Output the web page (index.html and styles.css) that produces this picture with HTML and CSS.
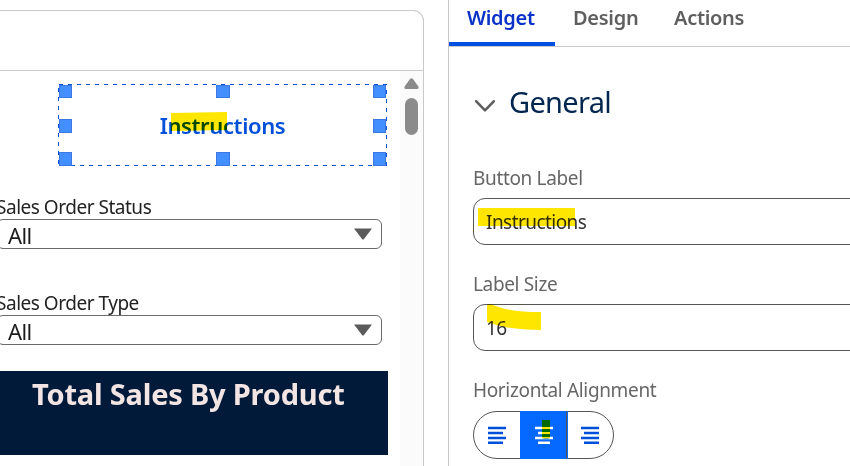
FILE: index.html
```html
<!DOCTYPE html>
<html lang="en">
<head>
<meta charset="utf-8">
<title>Dashboard editor</title>
<link rel="stylesheet" href="styles.css">
</head>
<body>
<div class="app">
  <main class="canvas">
    <div class="canvas-header"></div>
    <div class="canvas-body">
      <div class="content">
        <div class="selection">
          <svg class="outline" width="329" height="82" viewBox="0 0 329 82" fill="none" stroke="#0250d9" stroke-width="1" stroke-dasharray="4 5">
            <path d="M1 .5H329"/><path d="M4 81.5H329"/><path d="M.5 4V82"/><path d="M328.5 6V82"/>
          </svg>
          <div class="handles"><i></i><i></i><i></i><i class="mid"></i><b></b><i class="mid"></i><i></i><i></i><i></i></div>
          <span class="button-text">Instructions</span>
          <svg class="marker" width="57" height="20" viewBox="0 0 57 20"><path d="M0 1L56 0V18L0 19Z" fill="#ffe600"/></svg>
        </div>
        <div class="filter">
          <label class="filter-label">Sales Order Status</label>
          <div class="select"><span>All</span><svg width="18" height="12" viewBox="0 0 18 12"><path d="M0 .5H18L10 11Q9 12 8 11Z" fill="#5b5b5b"/></svg></div>
        </div>
        <div class="filter">
          <label class="filter-label">Sales Order Type</label>
          <div class="select"><span>All</span><svg width="18" height="12" viewBox="0 0 18 12"><path d="M0 .5H18L10 11Q9 12 8 11Z" fill="#5b5b5b"/></svg></div>
        </div>
        <div class="banner"><span>Total Sales By Product</span></div>
      </div>
      <div class="scrollbar">
        <svg width="15" height="11" viewBox="0 0 15 11"><path d="M6 1Q7.5-.7 9 1L14.4 8.6Q15.2 11 13 11H2Q-.2 11 .6 8.6Z" fill="#8b8b8b"/></svg>
        <div class="thumb"></div>
      </div>
    </div>
  </main>
  <aside class="panel">
    <nav class="tabs">
      <a class="tab active"><span>Widget</span></a>
      <a class="tab design"><span>Design</span></a>
      <a class="tab actions"><span>Actions</span></a>
    </nav>
    <h2 class="section">
      <svg width="20" height="12" viewBox="0 0 20 12" fill="none" stroke="#5f5f5f" stroke-width="2.6" stroke-linecap="round" stroke-linejoin="round"><path d="M1.3 1.3L10 10.3L18.7 1.3"/></svg>
      <span>General</span>
    </h2>
    <div class="field">
      <label>Button Label</label>
      <div class="input"><span class="value">Instructions</span>
        <svg class="marker" width="98" height="18" viewBox="0 0 98 18"><path d="M0 0H97V18H0Z" fill="#ffe600"/></svg>
      </div>
    </div>
    <div class="field">
      <label>Label Size</label>
      <div class="input size"><span class="value">16</span>
        <svg class="marker" width="54" height="26" viewBox="0 0 54 26"><path d="M0 0H4Q20 8 54 8V26Q20 26 0 18Z" fill="#ffe600"/></svg>
      </div>
    </div>
    <div class="field">
      <label>Horizontal Alignment</label>
      <div class="align-group">
        <div class="align"><svg width="18" height="18" viewBox="0 0 18 18" fill="#0250d9"><path d="M0 .8h18v2.4H0zM0 5.8h15v2.4H0zM0 10.8h18v2.4H0zM0 15.6h15V18H0z"/></svg></div>
        <div class="align on"><svg width="18" height="18" viewBox="0 0 18 18" fill="#fff"><path d="M0 .8h18v2.4H0zM3 5.8h12v2.4H3zM0 10.8h18v2.4H0zM3 15.6h12V18H3z"/></svg>
          <svg class="marker" width="8" height="19" viewBox="0 0 8 19"><path d="M0 0H8V18Q4 19 0 18Z" fill="#006a00"/><path d="M0 7h8v2H0zM0 12h8v2H0zM0 17h8v1H0z" fill="#ffe600"/></svg>
        </div>
        <div class="align"><svg width="18" height="18" viewBox="0 0 18 18" fill="#0250d9"><path d="M0 .8h18v2.4H0zM3 5.8h15v2.4H3zM0 10.8h18v2.4H0zM3 15.6h15V18H3z"/></svg></div>
      </div>
    </div>
  </aside>
</div>
</body>
</html>
```

FILE: styles.css
```css
* { box-sizing: border-box; }
body {
  margin: 0;
  background: #fff;
  font-family: "Noto Sans", sans-serif;
  overflow: hidden;
}
svg { display: block; flex: none; }
.app { display: flex; height: 466px; }

.canvas {
  width: 424px;
  margin: 10px 24px 0 0;
  border: 1px solid #c9c9c9;
  border-width: 1px 1px 0 0;
  border-top-right-radius: 11px;
  display: flex;
  flex-direction: column;
}
.canvas-header { height: 60px; border-bottom: 1px solid #c9c9c9; }
.canvas-body { flex: 1; display: flex; }
.content { width: 400px; overflow: hidden; }
.scrollbar {
  flex: 1;
  background: #fbfbfb;
  display: flex;
  flex-direction: column;
  align-items: center;
  padding-top: 7px;
  gap: 9px;
}
.thumb { width: 13px; height: 37px; border-radius: 7px; background: #8b8b8b; }

.selection {
  position: relative;
  width: 329px;
  height: 82px;
  margin: 13px 0 0 58px;
  display: flex;
  align-items: center;
  justify-content: center;
}
.outline { position: absolute; top: 0; left: 0; }
.handles {
  position: absolute;
  inset: 1px 1px 0 1px;
  display: grid;
  grid-template-columns: 13px 14px 13px;
  grid-template-rows: 13px 14px 14px;
  justify-content: space-between;
  align-content: space-between;
}
.handles i { background: #448fff; border: 1px solid #3b78e4; }
.handles .mid { margin: 1px 0 -1px; }
.button-text {
  font-size: 22px;
  line-height: 30px;
  font-weight: 600;
  letter-spacing: -0.38px;
  color: #0250d9;
}
.marker { position: absolute; mix-blend-mode: multiply; }
.selection .marker { left: 113px; top: 28px; }

.filter { width: 382px; height: 96px; }
.selection + .filter { margin-top: 29px; }
.filter-label {
  display: block;
  height: 24px;
  margin-left: -4px;
  font-size: 19px;
  line-height: 24px;
  letter-spacing: -0.48px;
  color: #222;
  white-space: nowrap;
}
.select {
  height: 30px;
  margin-left: -3px;
  border: 1px solid #6a6a6a;
  border-radius: 6px;
  display: flex;
  align-items: center;
  justify-content: space-between;
  padding: 1px 9px 0 10px;
  font-size: 22px;
  line-height: 26px;
  letter-spacing: -0.6px;
  color: #1b1b1b;
}
.select svg { margin-top: -2px; }
.banner {
  width: 388px;
  height: 84px;
  margin-top: -16px;
  padding: 4px 0 0 32px;
  background: #011a3a;
  color: #f2e5e4;
  font-size: 29px;
  font-weight: 700;
  line-height: 38px;
  letter-spacing: -0.2px;
  white-space: nowrap;
}

.panel { flex: 1; border-left: 1px solid #c9c9c9; }
.tabs { height: 47px; border-bottom: 1px solid #c9c9c9; display: flex; }
.tab {
  height: 46px;
  padding: 4px 0 0 18px;
  font-size: 20px;
  line-height: 27px;
  font-weight: 600;
  color: #5f5f5f;
  letter-spacing: -0.3px;
}
.tab.active { width: 106px; color: #0a32c8; border-bottom: 4px solid #0250e0; }
.design { width: 101px; }
.section {
  margin: 35px 0 0 26px;
  height: 40px;
  display: flex;
  align-items: center;
  gap: 14px;
  font-size: 29px;
  line-height: 40px;
  font-weight: 400;
  letter-spacing: -0.7px;
  color: #032650;
}
.section svg { margin-top: 7px; }
.field { margin-left: 24px; height: 106px; }
.section + .field { margin-top: 43px; }
.field label {
  display: block;
  height: 24px;
  font-size: 19px;
  line-height: 26px;
  color: #666;
  letter-spacing: -0.35px;
  white-space: nowrap;
}
.input {
  position: relative;
  height: 47px;
  margin: 9px -20px 0 0;
  border: 1px solid #555;
  border-radius: 12px;
  padding-left: 12px;
  font-size: 19px;
  line-height: 47px;
  letter-spacing: -0.55px;
  color: #333;
}
.input .marker { left: 4px; top: 9px; }
.input.size .marker { left: 13px; top: -1px; }
.align-group {
  display: flex;
  width: 141px;
  height: 48px;
  margin-top: 10px;
  border: 1px solid #555;
  border-radius: 24px;
}
.align { flex: 1; display: flex; align-items: center; justify-content: center; position: relative; }
.align.on {
  flex: 0 0 48px;
  margin: -1px 0;
  background: linear-gradient(90deg, #0568ff 46px, #555 46px 47px, #0568ff 47px);
}
.align .marker { left: 22px; top: 9px; mix-blend-mode: normal; }
```
